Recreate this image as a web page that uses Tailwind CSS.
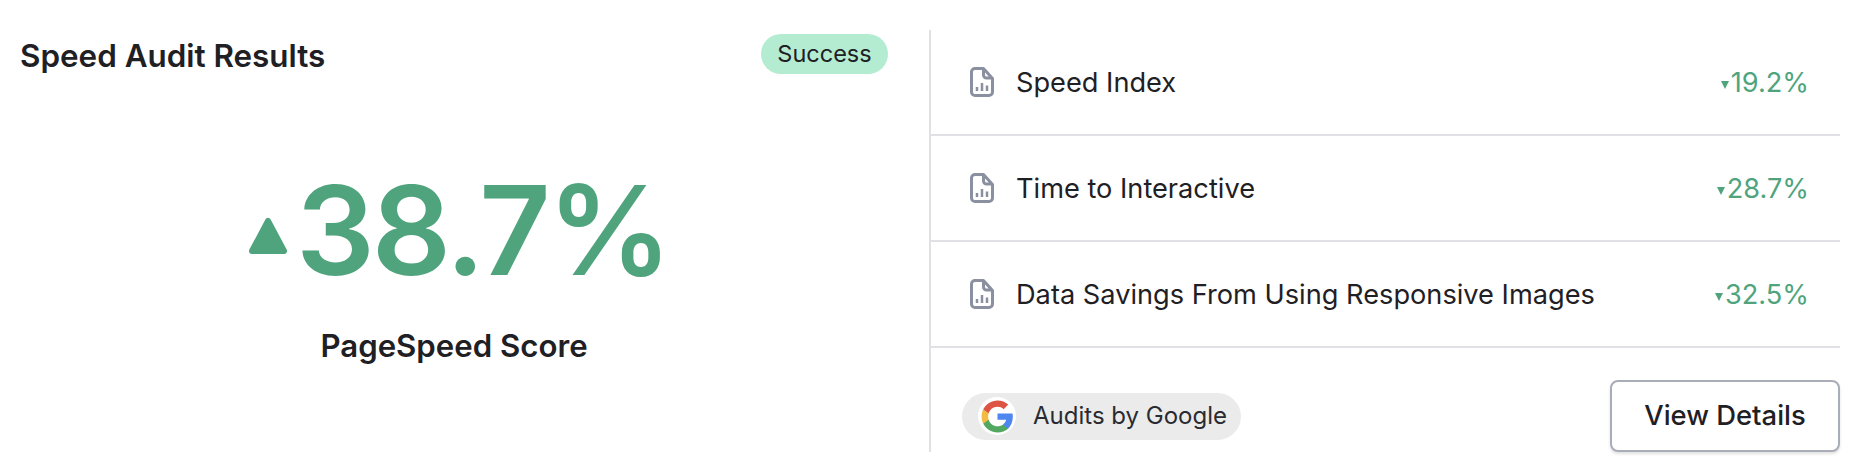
<!DOCTYPE html>
<html lang="en">
<head>
    <meta charset="UTF-8">
    <title>Speed Audit Results</title>
    <script src="https://cdn.jsdelivr.net/npm/@tailwindcss/browser@4"></script>
</head>
<body class="bg-white font-['Inter',sans-serif] text-[#1f2024] w-[1870px] h-[476px] overflow-hidden">
    <div class="flex pt-[30px] pl-[20px] pr-[30px]">
        <!-- left: score -->
        <div class="w-[911px] h-[422px] border-r-2 border-[#e0e0e5] pr-[41px] flex flex-col shrink-0">
            <div class="flex justify-between items-start pt-[4px]">
                <h2 class="text-[31.4px] leading-[40px] font-semibold mt-[2px]">Speed Audit Results</h2>
                <span class="h-[40px] w-[127px] rounded-[20px] bg-[#b4ecd2] text-[23.5px] flex items-center justify-center">Success</span>
            </div>
            <div class="flex items-center justify-center mt-[79px] pl-[10px]">
                <svg class="w-[38px] h-[38px] mt-[12px] mr-[9px]" viewBox="0 0 38 38"><path d="M19 4 L35 34 H3 Z" fill="#4fa47d" stroke="#4fa47d" stroke-width="6" stroke-linejoin="round"/></svg>
                <span class="text-[124px] leading-[150px] font-semibold text-[#4fa47d] tracking-tight">38.7%</span>
            </div>
            <p class="text-[31.2px] leading-[40px] font-semibold text-center mt-[21px]">PageSpeed Score</p>
        </div>
        <!-- right: metrics -->
        <div class="flex-1 flex flex-col">
            <div class="h-[106px] border-b-2 border-[#e0e0e5] flex items-center pt-[2px] pl-[39px] pr-[31px] text-[27.2px]">
                <svg class="w-[24px] h-[30px] -mt-[2px] mr-[22px]" viewBox="0 0 24 30" fill="none" stroke="#8b90a0" stroke-width="3"><path d="M5 1.5 H13.5 L22.5 11.5 V25 A3.5 3.5 0 0 1 19 28.500 H5 A3.5 3.5 0 0 1 1.5 25 V5 A3.5 3.5 0 0 1 5 1.500 Z M13.5 2 V8 A3 3 0 0 0 16.5 11 H22" stroke-linejoin="round"/><path d="M7 20 V24 M12 16 V24 M17 18.5 V24" stroke-width="2.5"/></svg>
                <span>Speed Index</span>
                <span class="ml-auto flex items-center text-[#4fa47d]"><svg class="w-[8px] h-[8px] mt-[4px] mr-[2px]" viewBox="0 0 8 8"><path d="M0 0 H8 L4 8 Z" fill="#4fa47d"/></svg>19.2%</span>
            </div>
            <div class="h-[106px] border-b-2 border-[#e0e0e5] flex items-center pt-[2px] pl-[39px] pr-[31px] text-[27.2px]">
                <svg class="w-[24px] h-[30px] -mt-[2px] mr-[22px]" viewBox="0 0 24 30" fill="none" stroke="#8b90a0" stroke-width="3"><path d="M5 1.5 H13.5 L22.5 11.5 V25 A3.5 3.5 0 0 1 19 28.500 H5 A3.5 3.5 0 0 1 1.5 25 V5 A3.5 3.5 0 0 1 5 1.500 Z M13.5 2 V8 A3 3 0 0 0 16.5 11 H22" stroke-linejoin="round"/><path d="M7 20 V24 M12 16 V24 M17 18.5 V24" stroke-width="2.5"/></svg>
                <span>Time to Interactive</span>
                <span class="ml-auto flex items-center text-[#4fa47d]"><svg class="w-[8px] h-[8px] mt-[4px] mr-[2px]" viewBox="0 0 8 8"><path d="M0 0 H8 L4 8 Z" fill="#4fa47d"/></svg>28.7%</span>
            </div>
            <div class="h-[106px] border-b-2 border-[#e0e0e5] flex items-center pt-[2px] pl-[39px] pr-[31px] text-[27.2px]">
                <svg class="w-[24px] h-[30px] -mt-[2px] mr-[22px]" viewBox="0 0 24 30" fill="none" stroke="#8b90a0" stroke-width="3"><path d="M5 1.5 H13.5 L22.5 11.5 V25 A3.5 3.5 0 0 1 19 28.500 H5 A3.5 3.5 0 0 1 1.5 25 V5 A3.5 3.5 0 0 1 5 1.500 Z M13.5 2 V8 A3 3 0 0 0 16.5 11 H22" stroke-linejoin="round"/><path d="M7 20 V24 M12 16 V24 M17 18.5 V24" stroke-width="2.5"/></svg>
                <span>Data Savings From Using Responsive Images</span>
                <span class="ml-auto flex items-center text-[#4fa47d]"><svg class="w-[8px] h-[8px] mt-[4px] mr-[2px]" viewBox="0 0 8 8"><path d="M0 0 H8 L4 8 Z" fill="#4fa47d"/></svg>32.5%</span>
            </div>
            <div class="flex items-center justify-between pl-[31px] pt-[32px]">
                <div class="h-[47px] w-[279px] rounded-full bg-[#ebebeb] flex items-center pl-[16px] text-[24px] text-[#2a2b30]">
                    <span class="w-[38px] h-[38px] rounded-full bg-white flex items-center justify-center mr-[17px]">
                        <svg class="w-[35px] h-[35px]" viewBox="0 0 48 48">
                            <path fill="#4f87f0" d="M45 24.5c0-1.6-.1-3.100-.4-4.500H24v8.600h11.800c-.5 2.700-2.100 5-4.400 6.600v5.500h7.100C42.600 36.900 45 31.200 45 24.500z"/>
                            <path fill="#52a860" d="M24 46c5.900 0 10.900-2 14.500-5.300l-7.100-5.500c-2 1.300-4.500 2.100-7.400 2.100-5.700 0-10.500-3.800-12.200-9H4.500v5.700C8.100 41.100 15.500 46 24 46z"/>
                            <path fill="#f2bb41" d="M11.800 28.300c-.4-1.300-.7-2.800-.7-4.300s.3-3 .7-4.300V14H4.500C3 17 2.200 20.400 2.200 24s.8 7 2.300 10l7.300-5.700z"/>
                            <path fill="#dd5444" d="M24 10.700c3.200 0 6.100 1.100 8.400 3.300l6.300-6.300C34.900 4.200 29.900 2 24 2 15.500 2 8.100 6.900 4.500 14l7.300 5.700c1.700-5.200 6.500-9 12.200-9z"/>
                        </svg>
                    </span>
                    Audits by Google
                </div>
                <button class="h-[72px] w-[230px] rounded-[8px] border-2 border-[#a9adb8] bg-white shadow-[0_2px_3px_rgba(0,0,0,0.12)] text-[27.4px] font-medium">View Details</button>
            </div>
        </div>
    </div>
</body>
</html>
